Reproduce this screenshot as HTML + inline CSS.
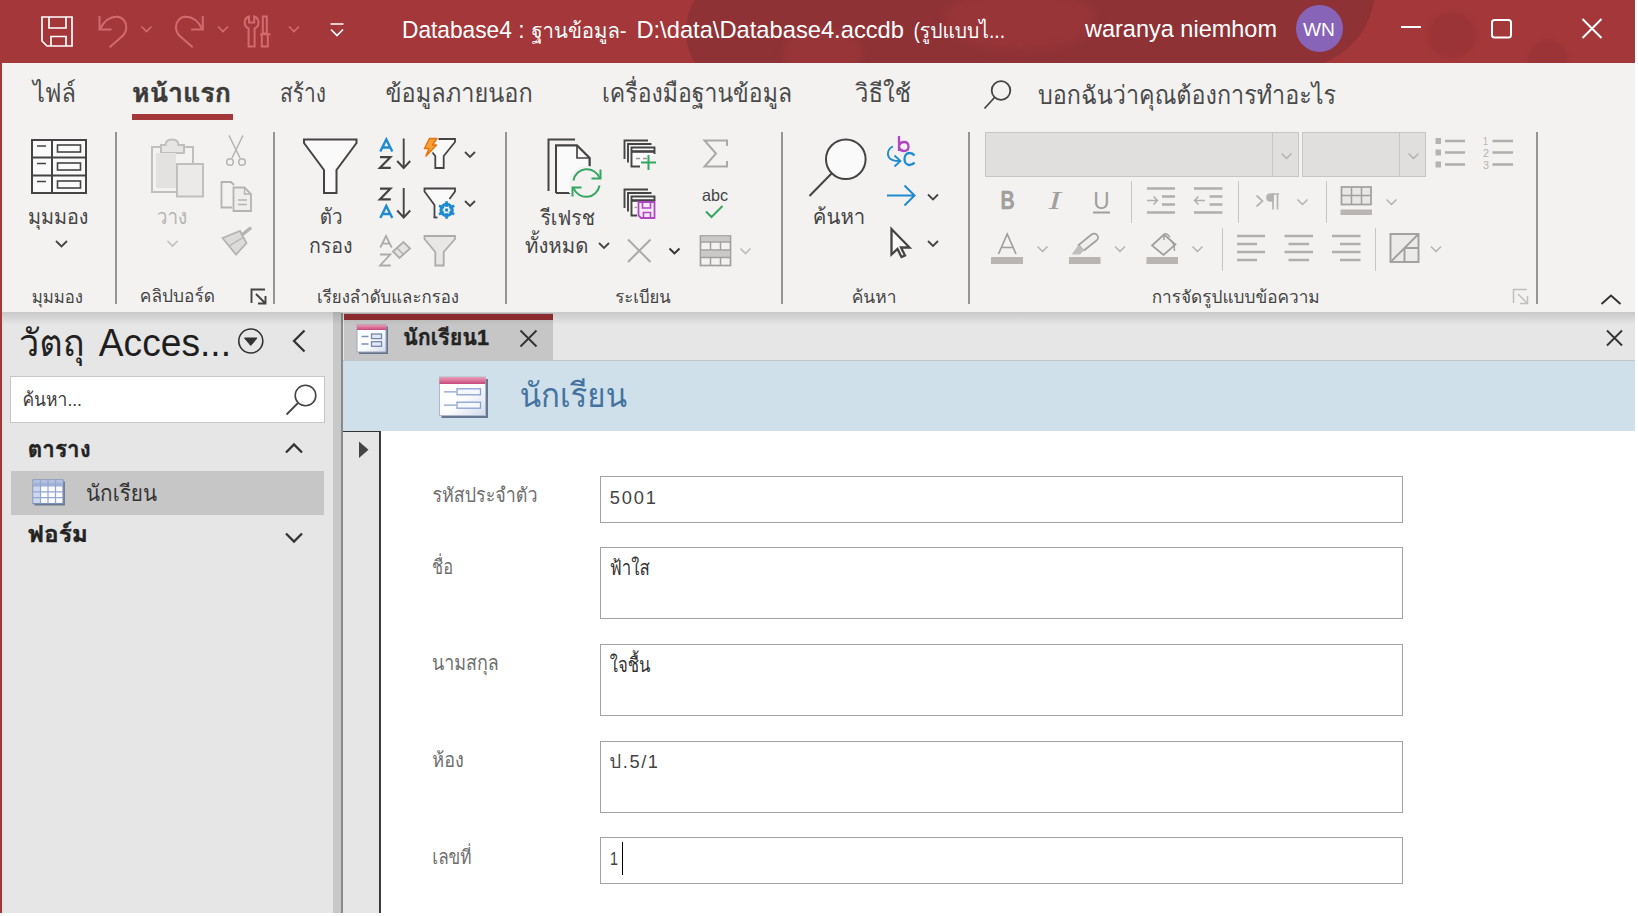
<!DOCTYPE html>
<html lang="th">
<head>
<meta charset="utf-8">
<title>Database4</title>
<style>
*{box-sizing:border-box;margin:0;padding:0}
html,body{width:1638px;height:916px;overflow:hidden;background:#fff}
body{font-family:"Liberation Sans","Loma","Noto Sans Thai Looped","Noto Sans Thai",sans-serif;color:#333;position:relative}
.abs{position:absolute}
#win{position:absolute;left:0;top:0;width:1635px;height:913px;background:#e6e6e6;overflow:hidden}
#title{position:absolute;left:0;top:0;width:1635px;height:63px;background:#a4373a;color:#fff;overflow:hidden}
#lborder{position:absolute;left:0;top:0;width:2px;height:913px;background:#a4373a}
#tabs{position:absolute;left:2px;top:63px;width:1633px;height:62px;background:#f3f2f1}
#ribbon{position:absolute;left:2px;top:125px;width:1633px;height:187px;background:#f3f2f1}
#ribshadow{position:absolute;left:2px;top:312px;width:1633px;height:13px;background:linear-gradient(rgba(0,0,0,.13),rgba(0,0,0,.05) 60%,rgba(0,0,0,0));z-index:2}
.t{position:absolute;white-space:nowrap;line-height:1}
.tab{font-size:22px;color:#444;top:80px}
.glabel{font-size:14.5px;color:#444;top:287px}
.sep{position:absolute;width:1.5px;background:#979593;top:132px;height:172px}
svg{position:absolute;overflow:visible}
.inp{left:599.5px;width:803px;background:#fff;border:1.5px solid #a2a2a2}
#txt text{white-space:pre}
</style>
</head>
<body>
<div id="win">
<div id="title">
  <div class="abs" style="left:686px;top:-30px;width:120px;height:123px;background:#8f3236;border-radius:50%"></div>
  <div class="abs" style="left:740px;top:0;width:560px;height:63px;background:#8f3236"></div>
  <div class="abs" style="left:1215px;top:-92px;width:160px;height:160px;background:#8f3236;border-radius:50%"></div>
  <div class="abs" style="left:783px;top:28px;width:80px;height:50px;background:#973539;border-radius:50%;filter:blur(3px)"></div>
  <div class="abs" style="left:945px;top:-12px;width:150px;height:62px;background:#983539;border-radius:50%;filter:blur(5px)"></div>
  <div class="abs" style="left:1428px;top:12px;width:48px;height:46px;background:#9b3437;border-radius:50%;filter:blur(2px)"></div>
  <div class="abs" style="left:1528px;top:40px;width:40px;height:40px;background:#9a3437;border-radius:50%;filter:blur(2px)"></div>
  <div class="abs" style="left:1296px;top:4.5px;width:47px;height:47px;border-radius:50%;background:#8764b8"></div>
</div>
<div id="tabs"></div>
<div id="ribbon"></div>
<div id="ribshadow"></div>
<div class="abs" style="left:132px;top:114px;width:101px;height:6px;background:#a4373a"></div>

<div class="sep" style="left:115px"></div>
<div class="sep" style="left:273px"></div>
<div class="sep" style="left:505px"></div>
<div class="sep" style="left:781px"></div>
<div class="sep" style="left:968px"></div>
<div class="sep" style="left:1536px"></div>
<div class="abs" style="left:1131px;top:181px;width:1px;height:42px;background:#c8c6c4"></div>
<div class="abs" style="left:1238px;top:181px;width:1px;height:42px;background:#c8c6c4"></div>
<div class="abs" style="left:1326px;top:181px;width:1px;height:42px;background:#c8c6c4"></div>
<div class="abs" style="left:1222px;top:228px;width:1px;height:43px;background:#c8c6c4"></div>
<div class="abs" style="left:1375px;top:228px;width:1px;height:43px;background:#c8c6c4"></div>
<div class="abs" style="left:985px;top:132px;width:314px;height:45px;background:#e1dfdd;border:1px solid #c8c6c4"></div>
<div class="abs" style="left:1272px;top:132px;width:1px;height:45px;background:#c8c6c4"></div>
<div class="abs" style="left:1302px;top:132px;width:124px;height:45px;background:#e1dfdd;border:1px solid #c8c6c4"></div>
<div class="abs" style="left:1399px;top:132px;width:1px;height:45px;background:#c8c6c4"></div>
<svg id="ico" width="1638" height="916" viewBox="0 0 1638 916" style="left:0;top:0;z-index:5" fill="none" stroke-linecap="butt">
<!-- ICONS -->
<!-- title bar -->
<g stroke="#fff" stroke-width="1.700">
<path d="M42,17H72V46H47L42,41Z"/>
<path d="M49,17V28H66V17M51,46V36.5H66V46"/>
<path d="M330.5,24H343.5M331,29.5l6,6l6,-6"/>
<path d="M1401,27H1421" stroke-width="2"/>
<rect x="1492" y="20" width="19" height="17.5" rx="2.5" stroke-width="2"/>
<path d="M1582.5,19l19,19M1601.5,19l-19,19" stroke-width="2"/>
</g>
<g stroke="#d26b6f" stroke-width="2">
<path d="M99.500,16V29.600H111.600"/>
<path d="M100,29C104,21 110,16.700 116.600,16.700C122.500,16.700 126.300,21.500 126.300,27.500C126.300,31 125,33.500 122.500,36L109.600,47.300"/>
<path d="M202.800,16V29.600H191.200"/>
<path d="M202.300,29C198.300,21 192.300,16.700 185.700,16.700C179.800,16.700 176,21.500 176,27.500C176,31 177.300,33.500 179.800,36L192.700,47.300"/>
<path d="M141.500,26.500l5,5l5,-5M218,26.500l5,5l5,-5M289,26.500l5,5l5,-5" stroke-width="1.700"/>
<path d="M249,16.500V22.500H254.200V16.500C257,17.500 258.500,20 258.500,22.500C258.500,25.500 256.800,27.500 254.600,28.500V46.500H248.600V28.500C246.400,27.500 244.700,25.500 244.700,22.500C244.700,20 246.200,17.500 249,16.500Z"/>
<path d="M262.800,16.500H266.800V33.500H262.800ZM260,34.200H270.500M261.800,34.200V46.500H267.800V34.200"/>
</g>
<!-- tab search icon -->
<g stroke="#444" stroke-width="1.800">
<circle cx="1001" cy="90.500" r="9.300"/><path d="M994.500,97.500L984.500,108.500"/>
</g>
<!-- view icon -->
<g stroke="#444" stroke-width="2">
<rect x="32" y="140" width="54" height="53" fill="#fafafa"/>
<path d="M32,157.500H86M32,175.500H86M52,140V193"/>
<path d="M37,146H46M37,163.500H46M37,181.500H46" stroke-width="1.600"/>
<rect x="57.500" y="145" width="23" height="7" stroke-width="1.600"/>
<rect x="57.500" y="163" width="23" height="7" stroke-width="1.600"/>
<rect x="57.500" y="181" width="23" height="7" stroke-width="1.600"/>
<path d="M56,241l5.500,5.500l5.500,-5.500" stroke-width="1.800"/>
</g>
<!-- paste (disabled) -->
<g stroke="#c1bfbd" stroke-width="2">
<path d="M161,147H152V192H176" fill="none"/>
<path d="M184,147H193V164"/>
<path d="M161,153V145H165.500C165.500,141 168.500,139.500 172,139.500C175.500,139.500 178.500,141 178.500,145H184V153Z" fill="#e6e5e4"/>
<rect x="156" y="153" width="20" height="35" fill="#e3e2e1" stroke="none"/>
<rect x="177" y="164" width="26" height="32.500" fill="#ebeae9"/>
<path d="M167.500,241l5,5l5,-5" stroke-width="1.600"/>
</g>
<!-- cut -->
<g stroke="#b5b3b1" stroke-width="1.500">
<path d="M229,135.500L240,158M243,135.500L232,158"/>
<circle cx="230" cy="162" r="3.300"/><circle cx="242" cy="162" r="3.300"/>
</g>
<!-- copy -->
<g stroke="#b5b3b1" stroke-width="1.800">
<path d="M232,207.500H221.500V182H231L234,185"/>
<path d="M233.500,187.500H244.500L251,194V211H233.500Z" fill="#efeeed"/>
<path d="M244.500,187.500V194H251" stroke-width="1.400"/>
<path d="M238,200H247M238,204.500H247" stroke-width="1.400"/>
</g>
<!-- format painter -->
<g stroke="#b5b3b1" stroke-width="1.800">
<path d="M222.500,238L240,231L246.500,243L236,254.500Z" fill="#dcdbda"/>
<path d="M229,246L243,237.500" stroke-width="1.300"/>
<path d="M242.500,234.500L250,228.500" stroke-width="3.500" stroke-linecap="round"/>
</g>
<!-- launcher -->
<g stroke="#444" stroke-width="1.900">
<path d="M251.500,303V289.500H265"/><path d="M256,294L265.500,303.500M265.500,296V303.500H258"/>
</g>
<g stroke="#c1bfbd" stroke-width="1.500">
<path d="M1513.500,303V289.500H1527"/><path d="M1518,294L1527.500,303.500M1527.500,296V303.500H1520"/>
</g>
<!-- collapse ribbon -->
<path d="M1601.500,304L1611,295.500L1620.500,304" stroke="#333" stroke-width="2"/>
<!-- big filter -->
<g stroke="#444" stroke-width="2">
<path d="M304,139.500H356.500V143L336.500,170V193H324V170L304,143Z" fill="#fafafa"/>
</g>
<!-- sort asc -->
<g stroke="#444" stroke-width="1.900">
<path d="M403.700,138.500V167.500M397.200,161L403.700,168L410.200,161"/>
<path d="M380,157.200H390.300L380,167.800H390.800" stroke-width="2.300"/>
<path d="M403.700,188V217M397.200,210.500L403.700,217.500L410.200,210.500"/>
<path d="M380,188.700H390.300L380,199.300H390.800" stroke-width="2.300"/>
</g>
<g stroke="#1e8bd1" stroke-width="2.400">
<path d="M380.300,151.500L386.300,139.500L392.300,151.500M382.300,147.500H390.300"/>
<path d="M380.300,218L386.300,206L392.300,218M382.300,214H390.300"/>
</g>
<!-- filter with lightning -->
<g stroke="#444" stroke-width="1.800">
<path d="M438.500,139H455V142L443.700,156V168H435.300V156L432.500,152.500" fill="#fafafa"/>
<path d="M465,152l5,5l5,-5M465,201l5,5l5,-5"/>
<path d="M443.700,201V205" />
<path d="M434.500,217.500V205L424.500,191.500V188.500H455V191.500L449.500,199" fill="#fafafa"/>
<path d="M433.600,217.500H437.500"/>
</g>
<path d="M429.500,138.500H436.800L432.500,145H436.500L426,156L429,148.500H424.500Z" fill="#f5a23a" stroke="#e8720c" stroke-width="1.500" stroke-linejoin="round"/>
<g stroke="#1e8bd1" fill="none">
<circle cx="446.600" cy="210" r="5.600" stroke-width="3.200"/>
<path d="M446.600,201.200V218.800M439,205.600L454.200,214.400M454.200,205.600L439,214.400" stroke-width="2.600"/>
<circle cx="446.600" cy="210" r="3.300" fill="#f3f2f1" stroke="none"/>
<circle cx="446.600" cy="210" r="1.700" fill="#1e8bd1" stroke="none"/>
</g>
<!-- disabled clear sort -->
<g stroke="#aeacaa" stroke-width="1.800">
<path d="M380.300,247.500L386,236L391.700,247.500M382.200,243.700H389.800"/>
<path d="M380,254.500H390.300L380,265.500H390.800"/>
<path d="M393,251.500L403.500,242L410,248.500L399.500,258Z" fill="#e4e3e2"/>
<path d="M397,248L403.500,254.500" stroke-width="1.300"/>
<path d="M424.500,236H455V239L443.700,252V265.500H435.300V252L424.500,239Z" fill="#e8e7e6"/>
</g>
<!-- refresh all -->
<g stroke="#444" stroke-width="2">
<path d="M575,139.500H548.500V191"/>
<path d="M556,193V145.500H577L589.500,158V168M556,193H570" fill="none"/>
<path d="M556,145.500H577L589.500,158V193H556Z" fill="#fafafa" stroke="none"/>
<path d="M556,193V145.500H577L589.500,158V166M556,193H569"/>
<path d="M577,145.500V158H589.500" stroke-width="1.700"/>
</g>
<circle cx="586.500" cy="183" r="17" fill="#f3f2f1"/>
<g stroke="#35a660" stroke-width="2">
<path d="M573.500,180.500A13.500,13.500 0 0 1 599.500,178"/>
<path d="M600.500,169.500V178.500H591.500"/>
<path d="M599.500,185.500A13.500,13.500 0 0 1 573.500,188"/>
<path d="M572.500,196.500V187.500H581.500"/>
</g>
<path d="M599,243l5,5l5,-5" stroke="#444" stroke-width="1.800"/>
<!-- new record -->
<g stroke="#444" stroke-width="1.900">
<path d="M648,140.500H624.500V159"/>
<path d="M651.500,144H628V162.500"/>
<path d="M640,166.500H631.500V147.500H654.500V154" fill="#fafafa"/>
<path d="M631.500,151.500H654.500" stroke-width="2.600"/>
<path d="M636,158.500H640M643,158.500H647" stroke="#9a9896" stroke-width="1.400"/>
</g>
<path d="M648.500,155V170M641,162.500H656" stroke="#35a660" stroke-width="2"/>
<!-- save record -->
<g stroke="#444" stroke-width="1.900">
<path d="M648,189.500H624.500V208"/>
<path d="M651.500,193H628V211.500"/>
<path d="M637,215.500H631.500V196.500H654.500V201" fill="#fafafa"/>
<path d="M631.500,200.500H654.500" stroke-width="2.600"/>
<path d="M634.500,207.500H637" stroke="#9a9896" stroke-width="1.400"/>
</g>
<g stroke="#b146c2" stroke-width="1.800">
<path d="M638.500,202H654.500V218H641L638.500,215.500Z" fill="#f6e9f8"/>
<path d="M642.500,202V208H650.500V202M643.500,218V212.500H650.500V218" stroke-width="1.600"/>
</g>
<!-- delete (disabled) -->
<path d="M628,239.500L650.500,262M650.500,239.500L628,262" stroke="#aba9a7" stroke-width="2"/>
<path d="M669.500,248.500l5,5l5,-5" stroke="#333" stroke-width="1.900"/>
<!-- sigma (disabled) -->
<path d="M727,146V140.500H704.500L716,153.500L704.500,166.500H727V161" stroke="#aba9a7" stroke-width="2"/>
<!-- spell check -->
<path d="M706,211.500L711.500,217L722.500,206" stroke="#35a660" stroke-width="2"/>
<!-- more (disabled) -->
<g stroke="#a19f9d" stroke-width="1.700">
<rect x="700.500" y="236" width="30" height="29.500" fill="#f3f2f1"/>
<rect x="701" y="236.500" width="29" height="5" fill="#cbc9c7" stroke="none"/>
<rect x="701" y="250.500" width="29" height="6.500" fill="#cbc9c7" stroke="none"/>
<path d="M700.500,242H730.500M700.500,250H730.500M700.500,257.500H730.500M710.500,242V250M720.500,242V250M710.500,257.500V265.500M720.500,257.500V265.500" stroke-width="1.500"/>
<path d="M740.500,248.500l5,5l5,-5" stroke="#bebcba"/>
</g>
<!-- find -->
<g stroke="#444" stroke-width="2">
<circle cx="845.800" cy="159.300" r="19.800" fill="#fafafa"/>
<path d="M831.500,173.500L809.500,196"/>
</g>
<!-- replace -->
<g stroke="#1e8bd1" stroke-width="1.800">
<path d="M893,146.500C888.500,148 886.500,153.500 889,157.500C891,160.500 895,161 899,161"/>
<path d="M894.500,155.500L900.500,161L894.500,166.500"/>
<path d="M914.500,155.500C913,153.500 911,153 909.500,153C906.500,153 904.500,155.500 904.500,159C904.500,162.500 906.500,165 909.500,165C911,165 913,164.500 914.500,162.500" stroke-width="2.300"/>
</g>
<path d="M899,136V151M899,145.500C900,143 902,142 904,142C906.500,142 908.500,143.500 908.500,146.500C908.500,149.500 906.500,151 904,151C902,151 900,150 899,147.500" stroke="#b146c2" stroke-width="2.300"/>
<!-- go to -->
<path d="M887,195.500H914.500M904.500,185.500L914.500,195.500L904.500,205.500" stroke="#1e8bd1" stroke-width="2"/>
<path d="M928,194.500l5,5l5,-5M928,241l5,5l5,-5" stroke="#444" stroke-width="1.800"/>
<!-- select -->
<path d="M891.500,229V254.500L897.500,249L901.500,257L905,255.500L901,247.500L909.500,247.500Z" fill="#fafafa" stroke="#444" stroke-width="2.300" stroke-linejoin="miter"/>
<!-- dropdown chevrons in combo boxes -->
<g stroke="#b5b3b1" stroke-width="1.500">
<path d="M1281.500,153.500l5,5l5,-5M1408.500,153.500l5,5l5,-5"/>
<path d="M1037.500,246.500l5,5l5,-5M1115,246.500l5,5l5,-5M1192.500,246.500l5,5l5,-5M1431,246.500l5,5l5,-5"/>
<path d="M1297.500,199.500l5,5l5,-5M1386.500,199.500l5,5l5,-5"/>
</g>
<!-- bullets -->
<g stroke="#b1afad" stroke-width="2.400">
<path d="M1445,141H1465M1445,152.500H1465M1445,164.500H1465"/>
<path d="M1492.500,141H1513M1492.500,152.500H1513M1492.500,164.500H1513"/>
</g>
<g fill="#b5b3b1" stroke="none">
<rect x="1435.500" y="138" width="5.500" height="6"/><rect x="1435.500" y="149.500" width="5.500" height="6"/><rect x="1435.500" y="161.500" width="5.500" height="6"/>
</g>
<!-- indent icons -->
<g stroke="#b1afad" stroke-width="2.400">
<path d="M1147,188.500H1175M1147,212.500H1175M1162,196.500H1175M1162,204.500H1175"/>
<path d="M1147,200.500H1157.500M1153.500,196.500L1157.500,200.500L1153.500,204.500" stroke-width="1.500"/>
<path d="M1194,188.500H1222.500M1194,212.500H1222.500M1209.500,196.500H1222.500M1209.500,204.500H1222.500"/>
<path d="M1205,200.500H1194.500M1198.500,196.500L1194.500,200.500L1198.500,204.500" stroke-width="1.500"/>
</g>
<!-- LTR pilcrow -->
<g stroke="#b5b3b1" stroke-width="1.700">
<path d="M1256.500,195.500L1262.500,201L1256.500,206.500"/>
<path d="M1273,194V209.500M1277.500,194V209.500M1279,194H1272"/>
<path d="M1273,194H1271C1268.500,194 1267,195.500 1267,197.500C1267,199.500 1268.500,201 1271,201H1273Z" fill="#b5b3b1"/>
</g>
<!-- gridlines -->
<g stroke="#a19f9d" stroke-width="1.700">
<rect x="1341.500" y="187" width="29.500" height="17.500" fill="#e8e7e6"/>
<path d="M1341.500,195.500H1371M1351.500,187V204.500M1361.500,187V204.500" stroke-width="1.500"/>
</g>
<rect x="1340.500" y="209.500" width="31.500" height="5.500" fill="#b8b5b2"/>
<!-- font color A, highlight, fill bars -->
<rect x="991" y="257" width="32" height="7" fill="#b8b5b2"/>
<rect x="1069" y="257" width="31.500" height="7" fill="#b8b5b2"/>
<rect x="1146.500" y="257" width="31.500" height="7" fill="#b8b5b2"/>
<g stroke="#a19f9d" stroke-width="1.700">
<path d="M998.500,254L1007.200,234L1016,254M1001.500,247.500H1013"/>
<path d="M1082.500,249.500L1078.500,245L1091.500,234.500C1093.500,233 1096,233.500 1097,235C1098.500,236.500 1098.500,239 1096.500,240.500L1084.500,250Z" fill="#f0efee"/>
<path d="M1078.500,245L1071.500,254.500H1080L1084.500,250Z" fill="#c1bfbd" stroke="none"/>
<path d="M1152,245.500L1164,234.500L1175.500,244.500L1163.500,255Z" fill="#f0efee"/>
<path d="M1164,240V236C1164,233.500 1166,233 1167.500,234.500L1170,237" stroke-width="1.400"/>
<path d="M1170.500,240.500C1173.500,242 1174.500,246 1174.500,251" stroke-width="1.400"/>
</g>
<!-- align -->
<g stroke="#b1afad" stroke-width="2.400">
<path d="M1237,236H1265M1237,244H1257M1237,252H1265M1237,260H1257"/>
<path d="M1284.500,236H1313M1288.500,244H1309M1284.500,252H1313M1288.500,260H1309"/>
<path d="M1332,236H1360.500M1340,244H1360.500M1332,252H1360.500M1340,260H1360.500"/>
</g>
<!-- alternate row color -->
<g stroke="#a19f9d" stroke-width="1.900">
<rect x="1390.500" y="234" width="28" height="28" fill="#ebeae9"/>
<path d="M1390.500,262L1418.500,234M1404.500,262V248M1404.500,248H1418.500"/>
</g>
<path d="M1093,212.500H1110" stroke="#a19f9d" stroke-width="2"/>
<!-- nav header -->
<g stroke="#333" stroke-width="1.600">
<circle cx="250.800" cy="341" r="12"/>
<path d="M244.500,338H257L250.800,345.500Z" fill="#333" stroke-width="1"/>
<path d="M304.500,330.500L294,341L304.500,351.500" stroke-width="2.300"/>
<circle cx="305.500" cy="395.500" r="10.300" stroke="#444"/>
<path d="M298,403L286.500,414.500" stroke="#444" stroke-width="1.800"/>
<path d="M286,452.500L294,444.500L302,452.500" stroke-width="2.300"/>
<path d="M286,533.500L294,541.500L302,533.500" stroke-width="2.300"/>
<path d="M520.500,330.500L536.500,346.500M536.500,330.500L520.500,346.500" stroke-width="1.900"/>
<path d="M1607,330.500L1622,345.500M1622,330.500L1607,345.500" stroke-width="1.900"/>
</g>
<path d="M359,441.500V458L368.500,449.800Z" fill="#444"/>
<defs>
<linearGradient id="gpink" x1="0" y1="0" x2="0" y2="1"><stop offset="0" stop-color="#eba0b8"/><stop offset="1" stop-color="#c8487a"/></linearGradient>
<linearGradient id="gbody" x1="0" y1="0" x2="1" y2="1"><stop offset="0" stop-color="#ffffff"/><stop offset="0.550" stop-color="#fbfcfe"/><stop offset="1" stop-color="#d4dcea"/></linearGradient>
<linearGradient id="gtbl" x1="0" y1="0" x2="0" y2="1"><stop offset="0" stop-color="#b9c8e6"/><stop offset="1" stop-color="#93a7d2"/></linearGradient>
</defs>
<!-- table icon -->
<g>
<path d="M64,481.500V504.500H34.500" stroke="#55647f" stroke-width="1.800" opacity="0.800"/>
<rect x="33" y="480" width="30" height="23.500" fill="#fdfdfe" stroke="#7d90b8" stroke-width="1.200"/>
<rect x="33.500" y="480.500" width="29" height="5.200" fill="url(#gtbl)"/>
<rect x="33.500" y="486" width="7" height="17" fill="#cdd8ee"/>
<path d="M33,486H63M33,491.800H63M33,497.600H63M40.500,480V503.500M48,480V503.500M55.500,480V503.500" stroke="#93a6d0" stroke-width="1.200"/>
</g>
<!-- doc tab form icon -->
<g>
<path d="M387,326.500V353H359" stroke="#55647f" stroke-width="2" opacity="0.850"/>
<rect x="357" y="324.500" width="29" height="27.500" fill="url(#gbody)" stroke="#9aa6bd" stroke-width="1"/>
<rect x="357" y="324.500" width="29" height="5.500" fill="url(#gpink)"/>
<path d="M361.500,336.500H368.500M361.500,344H368.500" stroke="#7f8fb0" stroke-width="1.400"/>
<rect x="371.500" y="334" width="10" height="4.600" fill="#e3eaf6" stroke="#7386ad" stroke-width="1.300"/>
<rect x="371.500" y="341.700" width="10" height="4.600" fill="#e3eaf6" stroke="#7386ad" stroke-width="1.300"/>
</g>
<!-- form header icon -->
<g>
<path d="M486.800,379V416.800H441.500" stroke="#55647f" stroke-width="2.400" opacity="0.850"/>
<rect x="439.500" y="377" width="46" height="38.500" fill="url(#gbody)" stroke="#aeb8cc" stroke-width="1"/>
<rect x="439.500" y="377" width="46" height="7" fill="url(#gpink)"/>
<path d="M444,391.800H456M444,405.200H456" stroke="#8aa0cf" stroke-width="1.200"/>
<rect x="457" y="388.800" width="23.500" height="6" fill="#f4f7fc" stroke="#8aa0cf" stroke-width="1.300"/>
<rect x="457" y="402.200" width="23.500" height="6" fill="#f4f7fc" stroke="#8aa0cf" stroke-width="1.300"/>
</g>
<!-- /ICONS -->
</svg>
<svg id="txt" width="1638" height="916" viewBox="0 0 1638 916" style="left:0;top:0;z-index:6">
<!-- TEXTS -->
<text x="402" y="38.0" font-size="24.3" fill="#fff" textLength="122.5" lengthAdjust="spacingAndGlyphs">Database4 :</text>
<text x="531.4" y="38.0" font-size="21.5" fill="#fff" textLength="95.2" lengthAdjust="spacingAndGlyphs">ฐานข้อมูล-</text>
<text x="636.4" y="38.0" font-size="24.3" fill="#fff" textLength="267.6" lengthAdjust="spacingAndGlyphs">D:\data\Database4.accdb</text>
<text x="913.4" y="38.0" font-size="21.5" fill="#fff" textLength="91.6" lengthAdjust="spacingAndGlyphs">(รูปแบบไ...</text>
<text x="1085" y="37.0" font-size="24.3" fill="#fff" textLength="192" lengthAdjust="spacingAndGlyphs">waranya niemhom</text>
<text x="1303" y="35.8" font-size="18.8" fill="#fff" textLength="32" lengthAdjust="spacingAndGlyphs">WN</text>
<text x="33" y="102.1" font-size="25.5" fill="#4a4a4a" textLength="43" lengthAdjust="spacingAndGlyphs">ไฟล์</text>
<text x="132" y="102.1" font-size="25.5" font-weight="bold" stroke="#3b3a39" stroke-width="0.45" fill="#3b3a39" textLength="99" lengthAdjust="spacingAndGlyphs">หน้าแรก</text>
<text x="280" y="102.1" font-size="25.5" fill="#4a4a4a" textLength="46" lengthAdjust="spacingAndGlyphs">สร้าง</text>
<text x="385.5" y="102.1" font-size="25.5" fill="#4a4a4a" textLength="147.2" lengthAdjust="spacingAndGlyphs">ข้อมูลภายนอก</text>
<text x="602" y="102.1" font-size="25.5" fill="#4a4a4a" textLength="190" lengthAdjust="spacingAndGlyphs">เครื่องมือฐานข้อมูล</text>
<text x="855" y="102.1" font-size="25.5" fill="#4a4a4a" textLength="56" lengthAdjust="spacingAndGlyphs">วิธีใช้</text>
<text x="1038" y="103.6" font-size="25.5" fill="#4a4a4a" textLength="298" lengthAdjust="spacingAndGlyphs">บอกฉันว่าคุณต้องการทำอะไร</text>
<text x="28" y="223.9" font-size="21.3" fill="#444" textLength="60.5" lengthAdjust="spacingAndGlyphs">มุมมอง</text>
<text x="156.8" y="223.9" font-size="21.3" fill="#b5b3b1" textLength="30.6" lengthAdjust="spacingAndGlyphs">วาง</text>
<text x="31.7" y="302.8" font-size="17.6" fill="#444" textLength="51.3" lengthAdjust="spacingAndGlyphs">มุมมอง</text>
<text x="139.8" y="301.8" font-size="17.6" fill="#444" textLength="75.2" lengthAdjust="spacingAndGlyphs">คลิปบอร์ด</text>
<text x="319.8" y="223.9" font-size="21.3" fill="#444" textLength="22.7" lengthAdjust="spacingAndGlyphs">ตัว</text>
<text x="308.9" y="252.8" font-size="21.3" fill="#444" textLength="43.6" lengthAdjust="spacingAndGlyphs">กรอง</text>
<text x="317" y="302.8" font-size="17.6" fill="#444" textLength="142" lengthAdjust="spacingAndGlyphs">เรียงลำดับและกรอง</text>
<text x="540.4" y="225.0" font-size="21.3" fill="#444" textLength="54.6" lengthAdjust="spacingAndGlyphs">รีเฟรช</text>
<text x="525" y="253.3" font-size="21.3" fill="#444" textLength="63.4" lengthAdjust="spacingAndGlyphs">ทั้งหมด</text>
<text x="615.3" y="302.8" font-size="17.6" fill="#444" textLength="55.5" lengthAdjust="spacingAndGlyphs">ระเบียน</text>
<text x="812.8" y="223.9" font-size="21.3" fill="#444" textLength="52.5" lengthAdjust="spacingAndGlyphs">ค้นหา</text>
<text x="851.7" y="302.8" font-size="17.6" fill="#444" textLength="44.8" lengthAdjust="spacingAndGlyphs">ค้นหา</text>
<text x="1151.7" y="302.8" font-size="17.6" fill="#444" textLength="168.0" lengthAdjust="spacingAndGlyphs">การจัดรูปแบบข้อความ</text>
<text x="702" y="201.0" font-size="16.5" fill="#444" textLength="26" lengthAdjust="spacingAndGlyphs">abc</text>
<text x="19" y="356.3" font-size="37.0" fill="#222" textLength="65.6" lengthAdjust="spacingAndGlyphs">วัตถุ</text>
<text x="98.8" y="356.3" font-size="38.4" fill="#1e1e1e" textLength="132.2" lengthAdjust="spacingAndGlyphs">Acces...</text>
<text x="22.4" y="405.5" font-size="18.5" fill="#3a3a3a" textLength="59.6" lengthAdjust="spacingAndGlyphs">ค้นหา...</text>
<text x="27.8" y="456.8" font-size="23.5" font-weight="bold" stroke="#222" stroke-width="0.45" fill="#222" textLength="62.8" lengthAdjust="spacingAndGlyphs">ตาราง</text>
<text x="86" y="501" font-size="22.5" fill="#333" textLength="71" lengthAdjust="spacingAndGlyphs">นักเรียน</text>
<text x="27.8" y="542.3" font-size="23.5" font-weight="bold" stroke="#222" stroke-width="0.45" fill="#222" textLength="60.2" lengthAdjust="spacingAndGlyphs">ฟอร์ม</text>
<text x="403" y="345.4" font-size="22.0" font-weight="bold" stroke="#222" stroke-width="0.45" fill="#222" textLength="86" lengthAdjust="spacingAndGlyphs">นักเรียน1</text>
<text x="519.7" y="406.6" font-size="34.0" fill="#44739f" textLength="107.3" lengthAdjust="spacingAndGlyphs">นักเรียน</text>
<text x="432.4" y="502.0" font-size="20" fill="#6e6e6e" textLength="105.1" lengthAdjust="spacingAndGlyphs">รหัสประจำตัว</text>
<text x="432" y="574.0" font-size="20" fill="#6e6e6e" textLength="21" lengthAdjust="spacingAndGlyphs">ชื่อ</text>
<text x="432" y="670.0" font-size="20" fill="#6e6e6e" textLength="66.8" lengthAdjust="spacingAndGlyphs">นามสกุล</text>
<text x="432.3" y="767.0" font-size="20" fill="#6e6e6e" textLength="31.5" lengthAdjust="spacingAndGlyphs">ห้อง</text>
<text x="432.3" y="864.0" font-size="20" fill="#6e6e6e" textLength="39.3" lengthAdjust="spacingAndGlyphs">เลขที่</text>
<text x="609.8" y="503.7" font-size="18.3" fill="#444" textLength="46.2" lengthAdjust="spacing">5001</text>
<text x="609.7" y="575.4" font-size="20.5" fill="#333" textLength="40.1" lengthAdjust="spacingAndGlyphs">ฟ้าใส</text>
<text x="609.7" y="671.5" font-size="20.5" fill="#333" textLength="40.9" lengthAdjust="spacingAndGlyphs">ใจชื้น</text>
<text x="609.6" y="768.4" font-size="18.3" fill="#444" textLength="48.4" lengthAdjust="spacing">ป.5/1</text>
<text x="610" y="865.0" font-size="18.3" fill="#444" textLength="8" lengthAdjust="spacingAndGlyphs">1</text>
<text x="1000.4" y="209.0" font-size="25.5" font-weight="bold" stroke="#a19f9d" stroke-width="0.45" fill="#a19f9d" textLength="14.2" lengthAdjust="spacingAndGlyphs">B</text>
<text x="1048.4" y="209.0" font-size="25.5" font-style="italic" font-family="Liberation Serif,serif" fill="#a19f9d" textLength="12.5" lengthAdjust="spacingAndGlyphs">I</text>
<text x="1093.2" y="209.0" font-size="24.0" fill="#a19f9d" textLength="16.4" lengthAdjust="spacingAndGlyphs">U</text>
<text x="1483" y="145.0" font-size="10.5" fill="#b5b3b1" textLength="5" lengthAdjust="spacingAndGlyphs">1</text>
<text x="1483" y="156.5" font-size="10.5" fill="#b5b3b1" textLength="6" lengthAdjust="spacingAndGlyphs">2</text>
<text x="1483" y="168.5" font-size="10.5" fill="#b5b3b1" textLength="6" lengthAdjust="spacingAndGlyphs">3</text>
<!-- /TEXTS -->
</svg>
<div class="abs" style="left:10px;top:376px;width:315px;height:47px;background:#fff;border:1px solid #c6c6c6"></div>
<div class="abs" style="left:11px;top:471px;width:313px;height:44px;background:#c6c6c6"></div>
<div class="abs" style="left:333px;top:312px;width:8px;height:601px;background:#c8c8c8"></div>
<div class="abs" style="left:341px;top:313px;width:2px;height:600px;background:#8a8a8a"></div>

<div class="abs" style="left:344px;top:313px;width:209px;height:47px;background:#c6c6c6"></div>
<div class="abs" style="left:344px;top:313.5px;width:209px;height:6.5px;background:#8b2a2f;z-index:3"></div>
<div class="abs" style="left:343px;top:360px;width:1292px;height:71px;background:#cfe0ea;border-top:1px solid #c2c5c8"></div>
<div class="abs" style="left:343px;top:431px;width:1292px;height:482px;background:#fff"></div>
<div class="abs" style="left:343px;top:431px;width:38px;height:482px;background:#e6e6e6;border-top:1.5px solid #333;border-right:2px solid #3a3a3a"></div>
<div class="abs inp" style="top:476px;height:47px"></div>
<div class="abs inp" style="top:547px;height:72px"></div>
<div class="abs inp" style="top:644px;height:72px"></div>
<div class="abs inp" style="top:740.5px;height:72px"></div>
<div class="abs inp" style="top:837px;height:47px"></div>
<div class="abs" style="left:621.5px;top:841.5px;width:1.6px;height:33.5px;background:#000"></div>

<div id="lborder"></div>
</div>
</body>
</html>
